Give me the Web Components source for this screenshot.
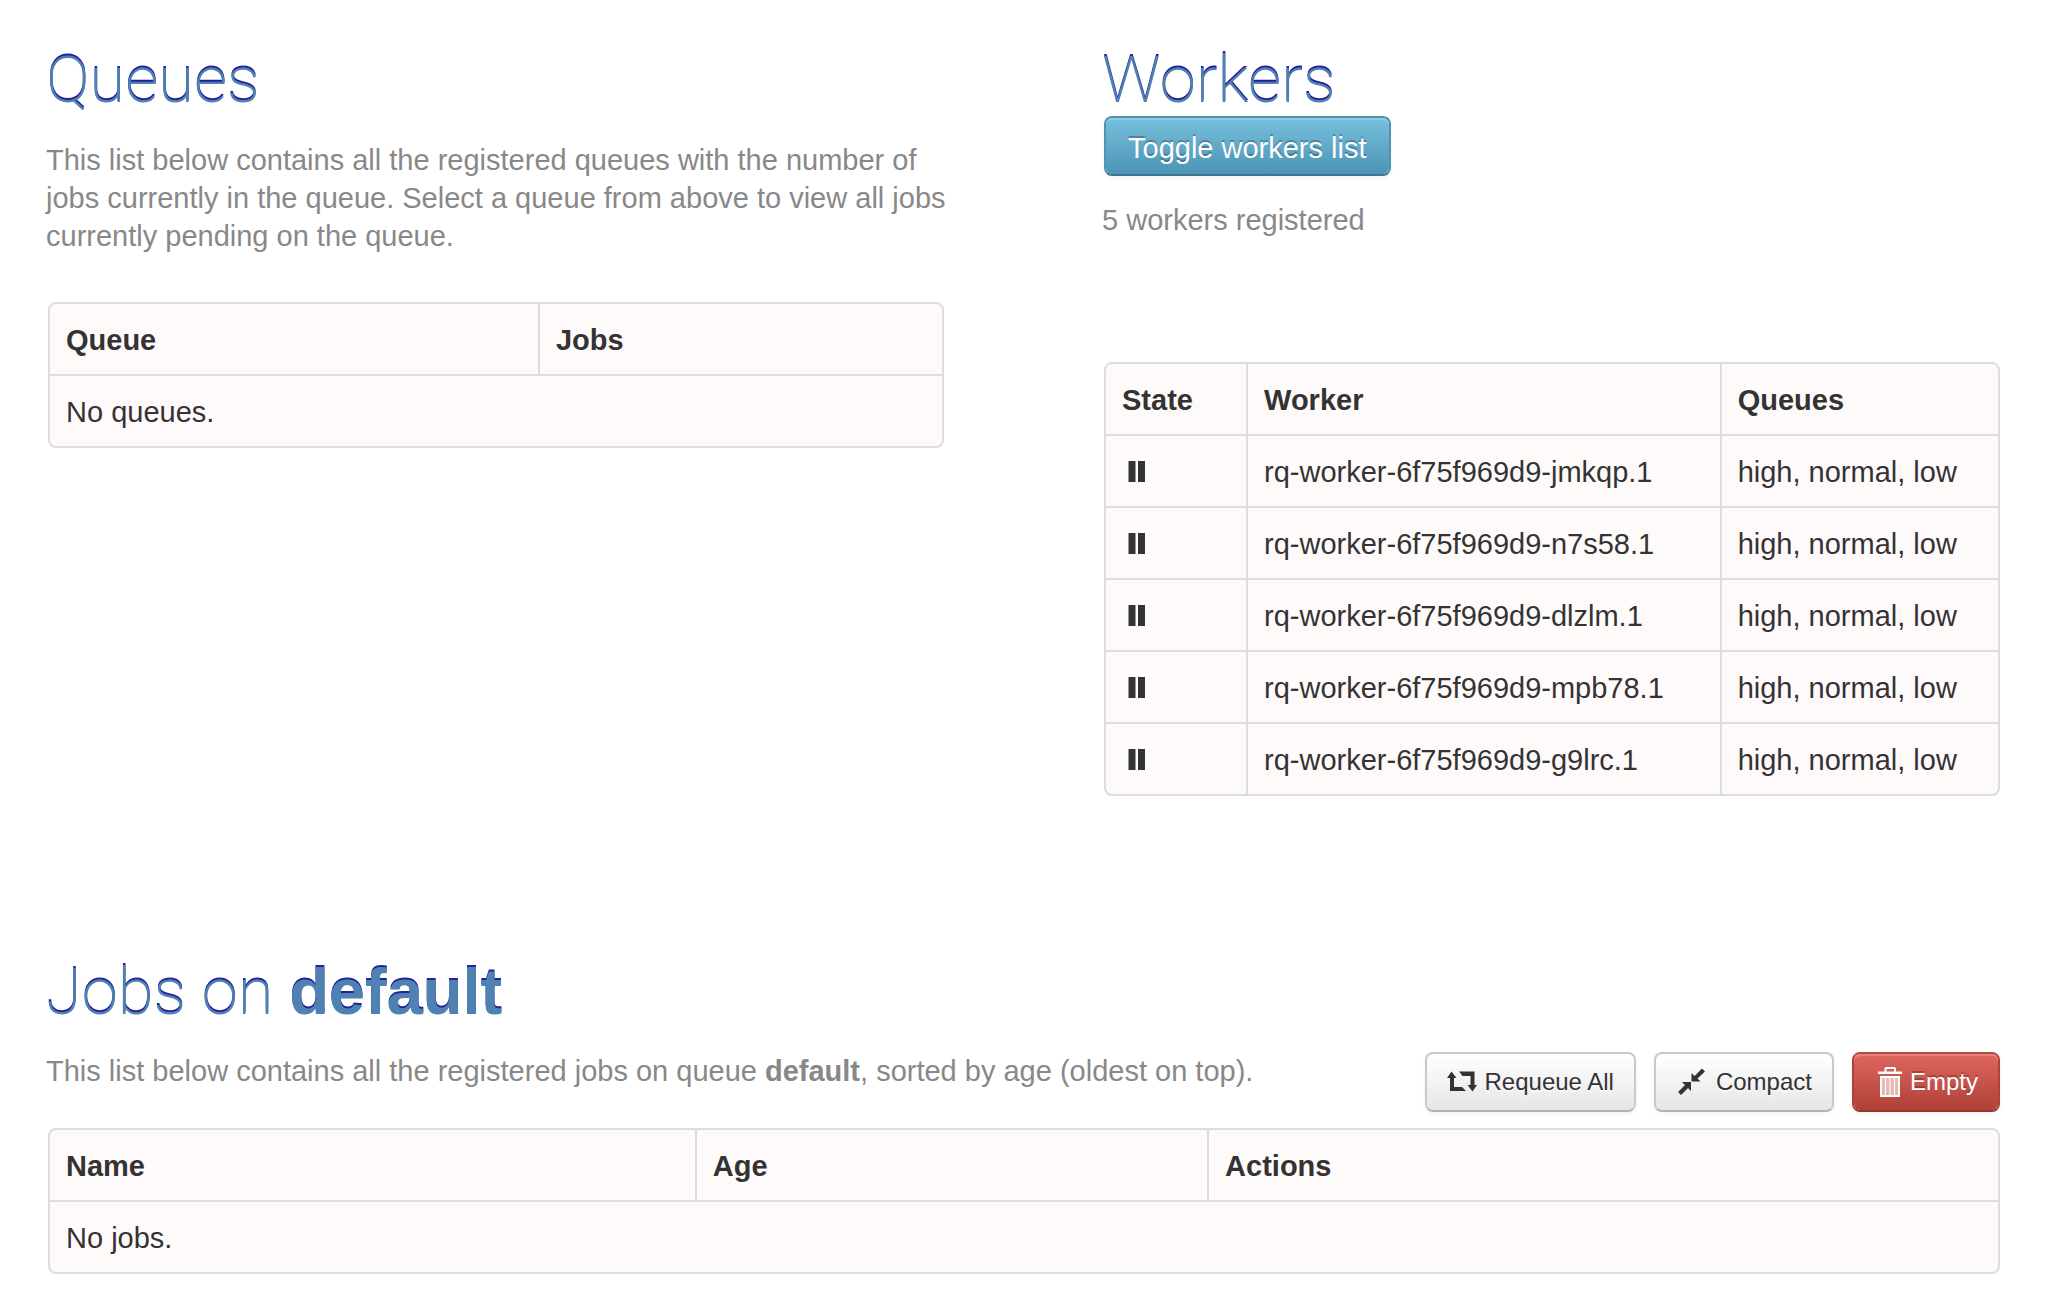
<!DOCTYPE html>
<html lang="en">
<head>
<meta charset="utf-8">
<title>RQ dashboard</title>
<style>
  html, body { margin: 0; background: #fff; }
  body { font-family: "Liberation Sans", Arial, sans-serif; font-size: 29px; line-height: 38px; color: #333; }
</style>
</head>
<body>
<rq-dashboard></rq-dashboard>
<script>
const define = (name, html, setup) => {
  const template = document.createElement('template');
  template.innerHTML = html;
  customElements.define(name, class extends HTMLElement {
    constructor() {
      super();
      this.attachShadow({ mode: 'open' }).append(template.content.cloneNode(true));
    }
    connectedCallback() { if (setup) setup(this, this.shadowRoot); }
  });
};

const icons = {
  pause: [25, 25, '<rect x="6.5" y="-1" width="7" height="21"/><rect x="16" y="-1" width="7" height="21"/>'],
  requeue: [30, 22, '<path d="M4.5 .5 9.5 7H7V16H15L19 20H3V7H0zM12 .5H27.5V14H30L25.5 20.5 20.5 14H23.5V5H15.5z"/>'],
  compact: [32, 28, '<path transform="translate(2 .5)" d="M13.5 4.5 16.5 7.5 24 0 27 3 19.5 10 22.5 13H13.5zM13 13.5V22.5L10 19.5 3 26.5 0 23.5 7 16.5 4 13.5z"/>'],
  trash: [28, 30, '<g transform="translate(4 0)"><path d="M0 4.5H6.5V1.5Q6.5 0 8 0H16.5Q18 0 18 1.5V4.5H24V7H0zM8.5 2V4.5H16V2z" fill-rule="evenodd"/><path d="M2 9H22V30H2z" fill-opacity=".6"/><path d="M2 9H22V11H2zM2 28H22V30H2zM2 11H4V28H2zM20 11H22V28H20zM7 11H8V28H7zM11.5 11H12.5V28H11.5zM16 11H17V28H16z"/></g>']
};

define('rq-icon', `
  <style>
    :host { display: inline-flex; flex: none; }
    svg { display: block; fill: currentColor; overflow: visible; }
  </style>
  <svg aria-hidden="true"></svg>`, (host, root) => {
  const svg = root.querySelector('svg'), [w, h, shape] = icons[host.getAttribute('name')];
  svg.setAttribute('viewBox', `0 0 ${w} ${h}`);
  svg.setAttribute('width', w);
  svg.setAttribute('height', h);
  svg.innerHTML = shape;
});

define('rq-heading', `
  <style>
    :host { display: block; padding-top: 4px; }
    h1 { margin: 0; font: 200 65px/72px Roboto, "Liberation Sans", sans-serif; color: #4f81b3; text-shadow: 0 -2px 0 #22229a; }
    ::slotted(strong) { font-family: "Liberation Sans", Arial, sans-serif; font-weight: 700; line-height: 1; }
  </style>
  <h1><slot></slot></h1>`);

define('rq-button', `
  <style>
    :host { display: inline-flex; }
    button {
      box-sizing: border-box; height: 60px; margin: 0; padding: 0 20px; display: flex; align-items: center; gap: 8px;
      font: 24px/36px "Liberation Sans", Arial, sans-serif; color: #333; white-space: nowrap;
      border: 2px solid #c9c9c9; border-bottom-color: #b3b3b3; border-radius: 8px;
      background: linear-gradient(#fff, #e6e6e6) padding-box;
      text-shadow: 0 2px 2px rgba(255,255,255,.75);
      box-shadow: inset 0 2px 0 rgba(255,255,255,.2), 0 2px 4px rgba(0,0,0,.05);
    }
    :host([kind="info"]) button, :host([kind="danger"]) button { color: #fff; text-shadow: 0 -2px 0 rgba(0,0,0,.25); }
    :host([kind="info"]) button {
      font-size: 29px; padding: 3px 22px 0;
      border-color: #4f95b3 #4f95b3 #3b7790; background: linear-gradient(#76c0dd, #4d94b4) padding-box;
    }
    :host([kind="danger"]) button {
      border-color: #b94843 #b0423c #963631; background: linear-gradient(#de6760, #b04036) padding-box;
    }
  </style>
  <button type="button"><slot></slot></button>`);

/* A bordered table. "columns" is a JSON list of [title, width]; "rows" is a JSON list of rows. */
define('rq-table', `
  <style>
    :host { display: block; }
    table {
      width: 100%; table-layout: fixed; border-collapse: separate; border-spacing: 0;
      border: 2px solid #ddd; border-radius: 8px; background: #fffafa;
    }
    th, td { padding: 17px 16px 15px; text-align: left; font-weight: 400; }
    th { font-weight: 700; }
    th + th, td + td { border-left: 2px solid #ddd; }
    td { border-top: 2px solid #ddd; }
    rq-icon { vertical-align: middle; }
  </style>
  <table><colgroup></colgroup><thead><tr></tr></thead><tbody></tbody></table>`, (host, root) => {
  const columns = JSON.parse(host.getAttribute('columns'));
  const rows = JSON.parse(host.getAttribute('rows'));
  root.querySelector('colgroup').innerHTML = columns.map(c => `<col style="width:${c[1]}">`).join('');
  root.querySelector('thead tr').innerHTML = columns.map(c => `<th scope="col">${c[0]}</th>`).join('');
  root.querySelector('tbody').innerHTML = rows.map(r => '<tr>' + r.map(cell =>
    `<td${r.length === 1 ? ` colspan="${columns.length}"` : ''}>${cell === 'idle' ? '<rq-icon name="pause"></rq-icon>' : cell}</td>`
  ).join('') + '</tr>').join('');
});

define('rq-dashboard', `
  <style>
    :host { display: block; padding: 40px 46px 24px; }
    p { margin: 0; color: #888; }
    rq-table, rq-button[kind="info"] { margin-left: 2px; }
    .overview { display: grid; grid-template-columns: 1fr 1fr; gap: 158px; min-height: 912px; box-sizing: border-box; align-items: start; }
    .queues, .workers, .jobs { display: flex; flex-direction: column; align-items: stretch; }
    .queues p { margin: 25px -8px 47px 0; }
    .workers rq-button { align-self: flex-start; }
    .workers p { margin: 25px 0 123px; }
    .bar { display: flex; align-items: flex-start; justify-content: space-between; margin: 24px 0 16px; }
    .actions { display: flex; gap: 18px; }
  </style>
  <div class="overview">
    <section class="queues">
      <rq-heading>Queues</rq-heading>
      <p>This list below contains all the registered queues with the number of jobs currently in the queue. Select a queue from above to view all jobs currently pending on the queue.</p>
      <rq-table columns='[["Queue","54.7%"],["Jobs","auto"]]' rows='[["No queues."]]'></rq-table>
    </section>
    <section class="workers">
      <rq-heading>Workers</rq-heading>
      <rq-button kind="info">Toggle workers list</rq-button>
      <p>5 workers registered</p>
      <rq-table columns='[["State","15.7%"],["Worker","53.1%"],["Queues","auto"]]'
        rows='[["idle","rq-worker-6f75f969d9-jmkqp.1","high, normal, low"],["idle","rq-worker-6f75f969d9-n7s58.1","high, normal, low"],["idle","rq-worker-6f75f969d9-dlzlm.1","high, normal, low"],["idle","rq-worker-6f75f969d9-mpb78.1","high, normal, low"],["idle","rq-worker-6f75f969d9-g9lrc.1","high, normal, low"]]'></rq-table>
    </section>
  </div>
  <section class="jobs">
    <rq-heading>Jobs on <strong>default</strong></rq-heading>
    <div class="bar">
      <p>This list below contains all the registered jobs on queue <strong>default</strong>, sorted by age (oldest on top).</p>
      <div class="actions">
        <rq-button><rq-icon name="requeue"></rq-icon>Requeue All</rq-button>
        <rq-button><rq-icon name="compact"></rq-icon>Compact</rq-button>
        <rq-button kind="danger"><rq-icon name="trash"></rq-icon>Empty</rq-button>
      </div>
    </div>
    <rq-table columns='[["Name","33.1%"],["Age","26.3%"],["Actions","auto"]]' rows='[["No jobs."]]'></rq-table>
  </section>`);
</script>
</body>
</html>
